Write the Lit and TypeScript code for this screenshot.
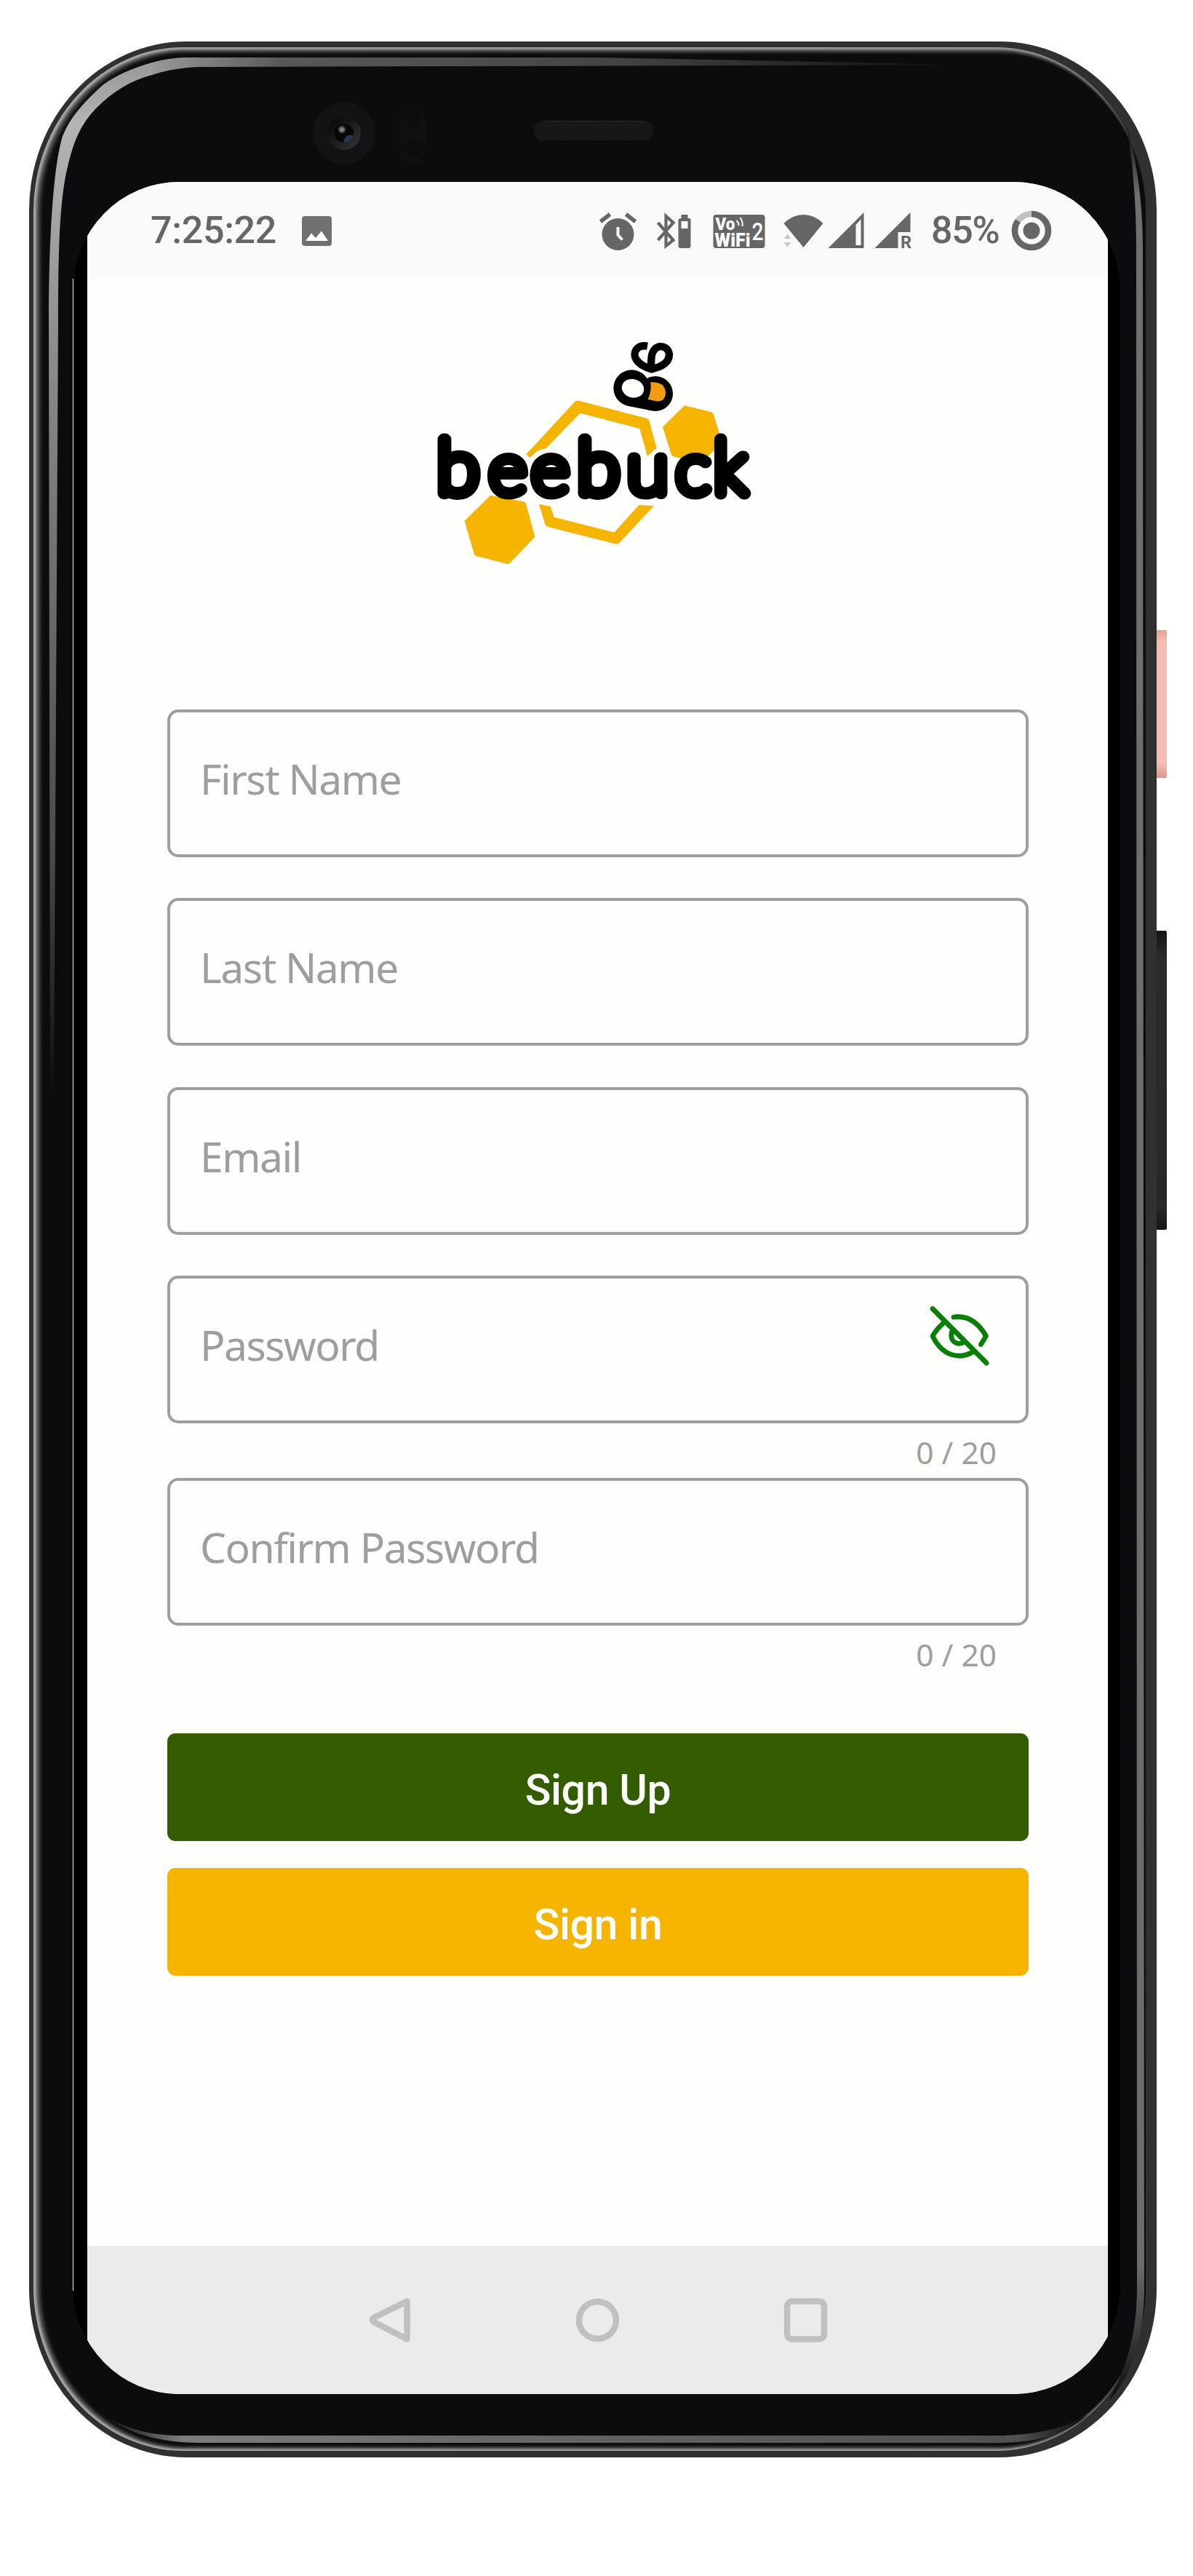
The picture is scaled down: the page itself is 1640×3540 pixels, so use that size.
import { LitElement, html, css, svg, nothing } from "lit";
import { customElement, property } from "lit/decorators.js";

const FALLOFF = Array.from({ length: 11 }, (_, i) => i);

@customElement("phone-shell")
class PhoneShell extends LitElement {
  static styles = css`
    :host { display: block; }
    svg { display: block; }
  `;
  render() {
    return html`<svg width="1640" height="3540" viewBox="0 0 1640 3540">
      <defs>
        <linearGradient id="rim" gradientUnits="userSpaceOnUse" x1="46" y1="0" x2="1575" y2="0">
          <stop offset="0" stop-color="#b4b4b4" /><stop offset=".14" stop-color="#a8a8a8" />
          <stop offset=".86" stop-color="#a0a0a0" /><stop offset=".96" stop-color="#808080" />
          <stop offset=".99" stop-color="#333" /><stop offset="1" stop-color="#0d0d0f" />
        </linearGradient>
        <linearGradient id="topGlow" gradientUnits="userSpaceOnUse" x1="209" y1="0" x2="1340" y2="0">
          <stop offset="0" stop-color="#999" /><stop offset=".16" stop-color="#585858" />
          <stop offset=".54" stop-color="#464646" /><stop offset="1" stop-color="#0d0d0f" />
        </linearGradient>
        <linearGradient id="leftGlow" gradientUnits="userSpaceOnUse" x1="0" y1="86" x2="0" y2="1500">
          <stop offset="0" stop-color="#999" /><stop offset=".06" stop-color="#b4b4b4" />
          <stop offset=".28" stop-color="#8c8c8c" /><stop offset=".78" stop-color="#484848" />
          <stop offset="1" stop-color="#0d0d0f" />
        </linearGradient>
        <linearGradient id="rightGlow" gradientUnits="userSpaceOnUse" x1="0" y1="173" x2="0" y2="3300">
          <stop offset="0" stop-color="#0d0d0f" /><stop offset=".03" stop-color="#6f6f6f" />
          <stop offset=".94" stop-color="#6b6b6b" /><stop offset="1" stop-color="#0d0d0f" />
        </linearGradient>
        <linearGradient id="bottomGlow" gradientUnits="userSpaceOnUse" x1="141" y1="0" x2="1494" y2="0">
          <stop offset="0" stop-color="#0d0d0f" /><stop offset=".08" stop-color="#7c7c7c" />
          <stop offset=".5" stop-color="#626262" /><stop offset=".93" stop-color="#505050" />
          <stop offset="1" stop-color="#0d0d0f" />
        </linearGradient>
        <linearGradient id="pink" x1="0" y1="0" x2="0" y2="1">
          <stop offset="0" stop-color="#e3a194" /><stop offset=".08" stop-color="#f4bfb2" />
          <stop offset=".9" stop-color="#f4bfb2" /><stop offset="1" stop-color="#d9958a" />
        </linearGradient>
        <linearGradient id="volume" x1="0" y1="0" x2="0" y2="1">
          <stop offset="0" stop-color="#141416" /><stop offset=".09" stop-color="#2b2b2b" />
          <stop offset=".92" stop-color="#282828" /><stop offset="1" stop-color="#161618" />
        </linearGradient>
        <linearGradient id="lens" x1="0" y1="0" x2="1" y2="1">
          <stop offset=".2" stop-color="#0d0d0d" /><stop offset="1" stop-color="#373737" />
        </linearGradient>
        <radialGradient id="glint"><stop offset="0" stop-color="#8c8c8c" /><stop offset=".4" stop-color="#777" /><stop offset="1" stop-color="#777" stop-opacity="0" /></radialGradient>
        <clipPath id="lensClip"><circle cx="473" cy="183" r="13" /></clipPath>
        <pattern id="mesh" width="4" height="4" patternUnits="userSpaceOnUse">
          <rect width="4" height="4" fill="#0e0e0e" /><rect width="2" height="2" fill="#212121" /><rect x="2" y="2" width="2" height="2" fill="#212121" />
        </pattern>
      </defs>
      <rect x="1586" y="866" width="18" height="203" rx="2" fill="url(#pink)" />
      <rect x="1586" y="1279" width="18" height="411" rx="2" fill="url(#volume)" />
      <rect x="40" y="57" width="1550" height="3320" rx="216" ry="232" fill="#303030" />
      <rect x="46" y="65" width="1529" height="3303" rx="206" ry="226" fill="url(#rim)" />
      ${FALLOFF.map((i) => {
        const dx = 1.5 * (i + 0.6);
        const top = 1.1 * (i + 1);
        const bottom = 0.9 * (i + 1);
        return svg`<rect x=${46 + dx} y=${65 + top} width=${1529 - dx - i * 0.3} height=${3303 - top - bottom}
          rx=${206 - i} ry=${225 - i} fill="#0d0d0f" fill-opacity=${i < 2 ? 0.12 : i < 6 ? 0.28 : 0.55} />`;
      })}
      <path d="M209 86C226 81 243 79 261 79H820L1340 89L820 90.500L282 92C257 92 232 95 209 103Z" fill="url(#topGlow)" />
      <path d="M209 86C181 94 160 103 141 117C115 141 97 160 86 187C73 230 67 330 67 440L69 1500H74L80 440C80 340 82 270 94 225C103 188 114 168 131 150C154 126 181 110 209 103Z" fill="url(#leftGlow)" />
      <path d="M1549 173C1560 210 1571 270 1571 340L1573 3150C1572 3210 1555 3270 1523 3300C1552 3250 1562 3200 1563 3150L1562 340C1562 280 1557 220 1549 173Z" fill="url(#rightGlow)" />
      <path d="M141 3318C176 3340 210 3347 251 3347H1370C1420 3347 1460 3338 1494 3320C1460 3349 1420 3357 1370 3357H275C220 3357 175 3344 141 3318Z" fill="url(#bottomGlow)" />
      <circle cx="473" cy="183" r="43" fill="#131315" />
      <circle cx="473" cy="183" r="23" fill="url(#lens)" />
      <circle cx="473" cy="183" r="13" fill="#070708" />
      <g clip-path="url(#lensClip)"><ellipse cx="480" cy="192" rx="8" ry="6" transform="rotate(-30 480 192)" fill="#2d3554" /></g>
      <circle cx="470" cy="178" r="6" fill="url(#glint)" />
      <rect x="548" y="143" width="37" height="82" rx="18" fill="#0f0f0f" />
      <circle cx="568" cy="158" r="11" fill="#0d0d0d" /><circle cx="568" cy="203" r="11" fill="#0d0d0d" />
      <rect x="734" y="166" width="164" height="27" rx="13" fill="url(#mesh)" />
      <path d="M747 166.500H885" stroke="#2a2a2a" />
      <rect x="100" y="250" width="1440" height="3040" rx="146" ry="150" fill="#000" />
      <path d="M100.500 383V3148" stroke="#f4f4f4" stroke-width="1" />
    </svg>`;
  }
}

@customElement("status-bar")
class StatusBar extends LitElement {
  static styles = css`
    :host { display: block; height: 133px; background: #fafafa; color: #666; font-family: Roboto, sans-serif; }
    .bar { display: flex; justify-content: space-between; align-items: flex-start; padding: 35px 76px 0 87px; }
    .group { display: flex; align-items: flex-start; }
    .time { font-size: 52px; line-height: 64px; font-weight: 500; width: 208px; white-space: nowrap; letter-spacing: -.3px; }
    .level { font-size: 52px; line-height: 64px; font-weight: 500; width: 102px; white-space: nowrap; letter-spacing: -1.300px; }
    svg { display: block; }
    .stamp { font-family: Roboto, sans-serif; font-weight: 900; }
    .slot { font-weight: 500; }
    .roam { font-family: Roboto, sans-serif; font-weight: 700; }
  `;
  render() {
    return html`<div class="bar">
      <div class="group">
        <span class="time">7:25:22</span>
        <svg width="41" height="64" viewBox="415 285 41 64"><rect x="415" y="297" width="41" height="41" rx="4" fill="#707070" /><path d="M420 331L428 320.500L434 327L442 317.500L451 331Z" fill="#fff" /></svg>
      </div>
      <div class="group">
        <svg width="459" height="64" viewBox="821.500 285 459 64" fill="#666">
          <circle cx="850" cy="322" r="22" />
          <path d="M826 304.500L839 294.500M861 294.500L874 304.500" stroke="#666" stroke-width="5.500" fill="none" />
          <path d="M850 312V323L856 329.500" stroke="#fafafa" stroke-width="4" fill="none" />
          <path d="M905 306L926 330L916 338V297L926 306L905 330" stroke="#666" stroke-width="4.200" fill="none" />
          <path fill-rule="evenodd" d="M937 295H946V300H948Q950 300 950 303V338Q950 341 947 341H936Q933 341 933 338V303Q933 300 937 300ZM937 304V314H946V304Z" />
          <rect x="981" y="295" width="71" height="46" rx="4" />
          <g fill="#fafafa" class="stamp">
            <text x="984" y="316" font-size="24" textLength="27" lengthAdjust="spacingAndGlyphs">Vo</text>
            <text x="983" y="338.500" font-size="25" textLength="49" lengthAdjust="spacingAndGlyphs">WiFi</text>
            <text class="slot" x="1034" y="330" font-size="34" textLength="16" lengthAdjust="spacingAndGlyphs">2</text>
          </g>
          <path d="M1013 303Q1016 306 1016 310M1018 299Q1022 304 1021 311" stroke="#fafafa" stroke-width="2" fill="none" />
          <path d="M1105 340L1078 307Q1090 295 1105 295T1132 307Z" />
          <path d="M1078 328L1083 322L1088 328ZM1078 333L1083 339L1088 333Z" fill="#c6c6c6" />
          <path fill-rule="evenodd" d="M1139 341L1188 292V341ZM1177 309V337H1184V301Z" />
          <path d="M1203 341L1252 292V319H1235V341Z" />
          <text class="roam" x="1238.500" y="341" font-size="24" textLength="15" lengthAdjust="spacingAndGlyphs">R</text>
        </svg>
        <span class="level">85%</span>
        <svg width="65" height="64" viewBox="1382 285 65 64">
          <circle cx="1418" cy="317" r="23" fill="none" stroke="#c1c1c1" stroke-width="8.500" />
          <circle cx="1418" cy="317" r="23" fill="none" stroke="#666" stroke-width="8.500" pathLength="100" stroke-dasharray="85 15" transform="rotate(-90 1418 317)" />
          <circle cx="1418" cy="317" r="11.500" fill="#666" />
        </svg>
      </div>
    </div>`;
  }
}

@customElement("bee-logo")
class BeeLogo extends LitElement {
  static styles = css`
    :host { display: block; }
    svg { display: block; margin: 0 auto; }
    .word { font-family: Lato, sans-serif; font-weight: 100; font-size: 100px; stroke: #000; stroke-width: 16.500px; stroke-linejoin: round; stroke-linecap: round; }
  `;
  render() {
    const letters: [string, number, number, number][] = [
      ["b", 20.5, 1.07, 1.02],
      ["e", 92, 1, 0.97],
      ["e", 150.5, 1, 0.97],
      ["b", 213.5, 1.07, 1.02],
      ["u", 282, 1.04, 0.98],
      ["c", 349, 1, 0.97],
      ["k", 401, 1, 1.02],
    ];
    return html`<svg width="480" height="360" viewBox="0 0 1440 1080">
      <g fill="#f4b400">
        <path d="M430 553L633 334Q640 330 650 333L928 405Q935 408 938 417L968 527L930 560L898 447L653 383L512 528L478 538L445 567Z" />
        <path d="M483 758L530 768L545 812L793 875L895 762L957 766L812 920Q806 924 796 922L520 852Q512 850 508 842Z" />
        <path d="M283 722L420 748Q428 750 430 758L466 893L362 1002Q357 1006 350 1004L224 972Q217 970 215 962L176 827Z" />
        <path d="M1083 352L1192 378Q1200 381 1203 389L1238 505L1150 590L1037 562Q1030 560 1028 552L993 440Z" />
      </g>
      <circle cx="865" cy="280" r="75" />
      <circle cx="963" cy="303" r="72" />
      <path d="M848 353L946 373L960 300L865 270Z" />
      <ellipse cx="870" cy="281" rx="46" ry="38" transform="rotate(14 870 281)" fill="#fefefd" />
      <path d="M943 256C985 254 1005 270 1005 300C1004 326 988 337 965 334L932 326Q948 292 943 256Z" fill="#f39c12" />
      <path d="M930 107C884 99 866 138 885 164Q902 188 946 202C1000 190 1020 168 1020 140C1015 110 992 107 977 109C945 120 944 155 946 200" fill="none" stroke="#000" stroke-width="31" stroke-linejoin="round" />
      <g transform="scale(3)" class="word">
        ${letters.map(([ch, x, sx, sy]) => svg`<text transform="translate(${x} 238) scale(${sx} ${sy})">${ch}</text>`)}
      </g>
    </svg>`;
  }
}

@customElement("text-field")
class TextField extends LitElement {
  static styles = css`
    :host { display: block; font-family: "Noto Sans", sans-serif; color: #9e9e9e; }
    .box { box-sizing: border-box; height: 203px; border: 4px solid #9e9e9e; border-radius: 15px; display: flex; justify-content: space-between; padding: 61px 50px 0 41px; }
    .label { font-size: 57px; line-height: 60px; letter-spacing: -1.500px; white-space: nowrap; }
    .eye { display: block; margin-top: -24px; }
    .counter { height: 60px; padding: 15px 44px 0 0; text-align: right; font-size: 42.500px; line-height: 50px; }
  `;
  @property() label = "";
  @property() counter = "";
  @property({ type: Boolean }) secret = false;
  render() {
    return html`<div class="box">
        <span class="label">${this.label}</span>
        ${this.secret
          ? html`<svg class="eye" width="82" height="84" viewBox="1278 1794 82 84" fill="none" stroke="#088008" stroke-width="6.800" stroke-linecap="round" stroke-linejoin="round">
              <path d="M1282 1798.500L1356 1873" /><path d="M1311 1810Q1338 1806 1355.500 1836L1348.500 1847.500" />
              <path d="M1297 1818Q1288 1826 1282 1836C1296 1865 1320 1868 1337 1858" /><path d="M1308.500 1830C1305 1843 1315 1850 1326 1844" /></svg>`
          : nothing}
      </div>
      ${this.counter ? html`<div class="counter">${this.counter}</div>` : nothing}`;
  }
}

@customElement("nav-bar")
class NavBar extends LitElement {
  static styles = css`
    :host { display: flex; height: 204px; background: #ebebeb; align-items: center; justify-content: center; gap: 226px; }
    svg { display: block; fill: none; stroke: #c0c0c0; stroke-width: 8.500px; stroke-linejoin: round; }
  `;
  render() {
    return html`
      <svg width="60" height="62" viewBox="0 0 60 62"><path d="M53.500 5.500V57.500L8 34Q4 31 8 28Z" /></svg>
      <svg width="60" height="62" viewBox="0 0 60 62"><circle cx="29.500" cy="31.500" r="25.500" /></svg>
      <svg width="60" height="62" viewBox="0 0 60 62"><rect x="4" y="5.500" width="51" height="52" rx="7" /></svg>`;
  }
}

@customElement("app-root")
class AppRoot extends LitElement {
  static styles = css`
    :host { display: block; width: 1640px; height: 3540px; background: #fff; position: relative; overflow: hidden; }
    .shell { position: absolute; inset: 0; }
    .stage { position: relative; padding: 250px 117px 0 120px; }
    .screen { height: 3040px; background: #fefefd; display: flex; flex-direction: column; clip-path: inset(0 -17px 0 -20px round 146px / 150px); }
    .content { flex: 1; padding: 0 109px 0 110px; display: flex; flex-direction: column; }
    .logo { margin: 57px 0 174.500px -2px; width: 1184px; }
    .fields { display: flex; flex-direction: column; }
    .plain { margin-bottom: 56.500px; }
    .actions { display: flex; flex-direction: column; gap: 37px; margin-top: 73px; }
    .action { height: 148px; border-radius: 11px; color: #fefefd; font: 500 59px/156px Roboto, sans-serif; text-align: center; letter-spacing: -0.400px; }
    .up { background: #335c00; }
    .in { background: #f4b400; }
  `;
  render() {
    return html`<phone-shell class="shell"></phone-shell>
      <div class="stage"><div class="screen">
        <status-bar></status-bar>
        <main class="content">
          <bee-logo class="logo"></bee-logo>
          <div class="fields">
            <text-field class="plain" label="First Name"></text-field>
            <text-field class="plain" label="Last Name"></text-field>
            <text-field class="plain" label="Email"></text-field>
            <text-field label="Password" counter="0 / 20" secret></text-field>
            <text-field label="Confirm Password" counter="0 / 20"></text-field>
          </div>
          <div class="actions">
            <div class="action up">Sign Up</div>
            <div class="action in">Sign in</div>
          </div>
        </main>
        <nav-bar></nav-bar>
      </div></div>`;
  }
}
